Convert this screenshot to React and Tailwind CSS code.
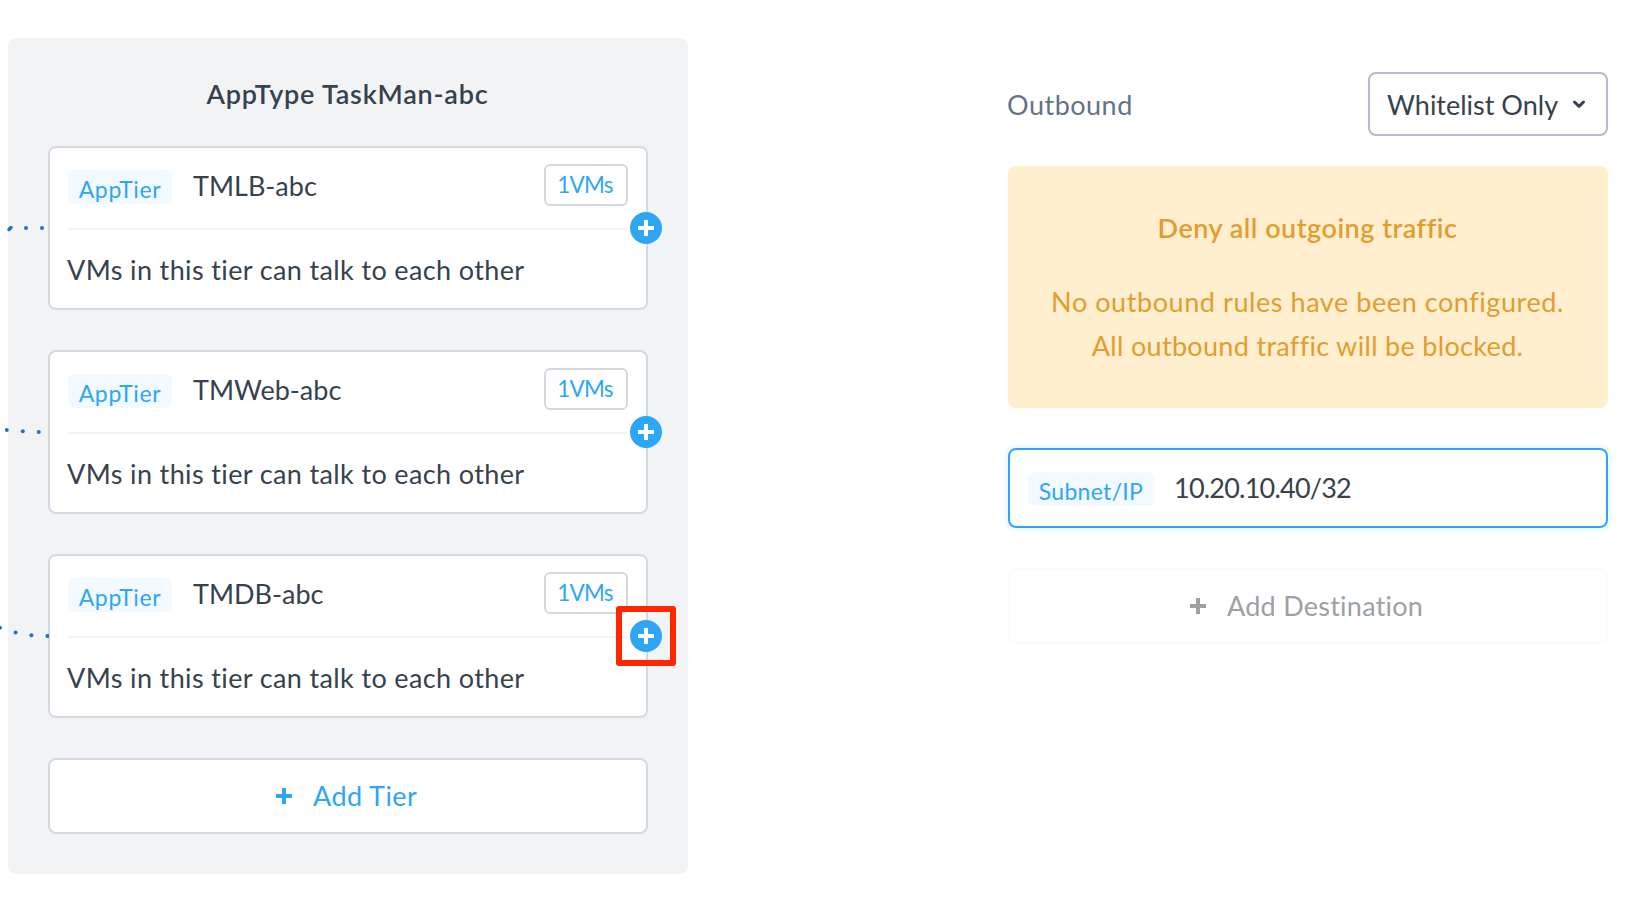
import React from "react";

const TIERS = [
  { name: "TMLB-abc", vms: 1 },
  { name: "TMWeb-abc", vms: 1 },
  { name: "TMDB-abc", vms: 1, highlighted: true },
];

const LINK_DOTS = [
  [26, 228], [42, 228],
  [6.8, 430], [22.8, 431.3], [38.8, 432],
  [0, 627.8], [15.6, 632.4], [31.4, 635.2], [47.4, 636],
];

function Plus({ className }) {
  return (
    <svg className={className} width="16" height="16" viewBox="0 0 16 16" fill="currentColor" aria-hidden="true">
      <path d="M6 0h4v6h6v4h-6v6H6v-6H0V6h6z" />
    </svg>
  );
}

function Tag({ children, className }) {
  return (
    <span className={`flex h-[34px] justify-center rounded-md bg-[#f2faff] text-[23px] leading-[38px] text-[#2ea6f6] ${className}`}>
      {children}
    </span>
  );
}

function TierCard({ tier }) {
  return (
    <div className="relative flex h-[164px] flex-col rounded-lg border-2 border-[#d3d9e0] bg-white px-[18px]">
      <div className="flex h-[82px] shrink-0 items-start border-b-2 border-[#f2f3f5]">
        <Tag className="mt-[22px] w-[104px] tracking-[0.65px]">AppTier</Tag>
        <span className="mt-4 ml-[21px] leading-[44px]">{tier.name}</span>
        <span className="mt-4 ml-auto flex h-[42px] w-[84px] justify-center rounded-md border-2 border-[#d3d9e0] bg-white pr-0.5 text-[22.5px] leading-[38px] tracking-[-0.8px] text-[#2ea6f6]">
          {tier.vms}VMs
        </span>
      </div>
      <p className="-ml-px leading-[80px] tracking-[0.37px]">VMs in this tier can talk to each other</p>
      <button className="absolute top-16 -right-4 flex size-8 items-center justify-center rounded-full bg-[#2ea6f6] text-white">
        <Plus />
      </button>
      {tier.highlighted && (
        <div className="absolute top-[50px] -right-[30px] size-[60px] rounded-[3px] border-6 border-[#ff2600]" />
      )}
    </div>
  );
}

export default function App() {
  return (
    <div className="relative flex h-[900px] w-[1648px] items-start overflow-hidden bg-white pl-2 font-[Lato,sans-serif] text-[27px] text-[#36424d]">
      <section className="mt-[38px] flex h-[836px] w-[680px] flex-col gap-10 rounded-lg bg-[#f2f3f5] px-10 pt-[34px]">
        <h2 className="-mb-[10px] pr-px text-center font-semibold leading-[44px] tracking-[0.78px]">AppType TaskMan-abc</h2>
        {TIERS.map((tier) => (
          <TierCard key={tier.name} tier={tier} />
        ))}
        <button className="flex h-[76px] shrink-0 items-center rounded-lg border-2 border-[#d3d9e0] bg-white pl-[226px] text-[#2ea6f6]">
          <Plus />
          <span className="ml-[21px] tracking-[0.45px]">Add Tier</span>
        </button>
      </section>

      <section className="mt-[72px] ml-[320px] flex w-[600px] flex-col">
        <div className="flex h-16 items-center justify-between">
          <span className="-ml-px pt-0.5 tracking-[0.5px] text-[#627386]">Outbound</span>
          <button className="flex h-16 w-[240px] items-center rounded-lg border-2 border-[#b4bccb] pl-[17px]">
            <span className="pt-0.5">Whitelist Only</span>
            <svg className="ml-3.5" width="14" height="10" viewBox="0 0 14 10" fill="none" stroke="currentColor" strokeWidth="3" strokeLinecap="round" strokeLinejoin="round" aria-hidden="true">
              <path d="M2.5 3 7 7.300l4.500-4.300" />
            </svg>
          </button>
        </div>

        <div className="mt-[30px] flex h-[242px] flex-col rounded-lg bg-[#ffefcf] pt-10 pr-px text-center text-[#e39c2d]">
          <h3 className="leading-[44px] font-semibold tracking-[0.5px]">Deny all outgoing traffic</h3>
          <p className="mt-[30px] leading-[44px] tracking-[0.57px]">No outbound rules have been configured.</p>
          <p className="leading-[44px] tracking-[0.32px]">All outbound traffic will be blocked.</p>
        </div>

        <div className="mt-10 flex h-20 items-start rounded-lg border-2 border-[#2ea6f6] bg-white px-[18px] ring-4 ring-[#f2faff]">
          <Tag className="mt-[22px] w-[126px] tracking-[0.3px]">Subnet/IP</Tag>
          <span className="mt-4 ml-5 leading-[44px] tracking-[-0.78px]">10.20.10.40/32</span>
        </div>

        <button className="mt-10 flex h-[76px] items-center rounded-lg border-2 border-[#fafafb] pl-[180px] text-[#9ba1a6]">
          <Plus />
          <span className="ml-[21px] tracking-[0.25px]">Add Destination</span>
        </button>
      </section>

      <svg className="pointer-events-none absolute top-0 left-0" width="49" height="900" viewBox="0 0 49 900" aria-hidden="true">
        <path d="M9 229.500 11 227.500" stroke="#1f70cf" strokeWidth="3.500" strokeLinecap="round" />
        {LINK_DOTS.map(([x, y]) => (
          <circle key={`${x}-${y}`} cx={x} cy={y} r="2" fill="#1f70cf" />
        ))}
      </svg>
    </div>
  );
}
